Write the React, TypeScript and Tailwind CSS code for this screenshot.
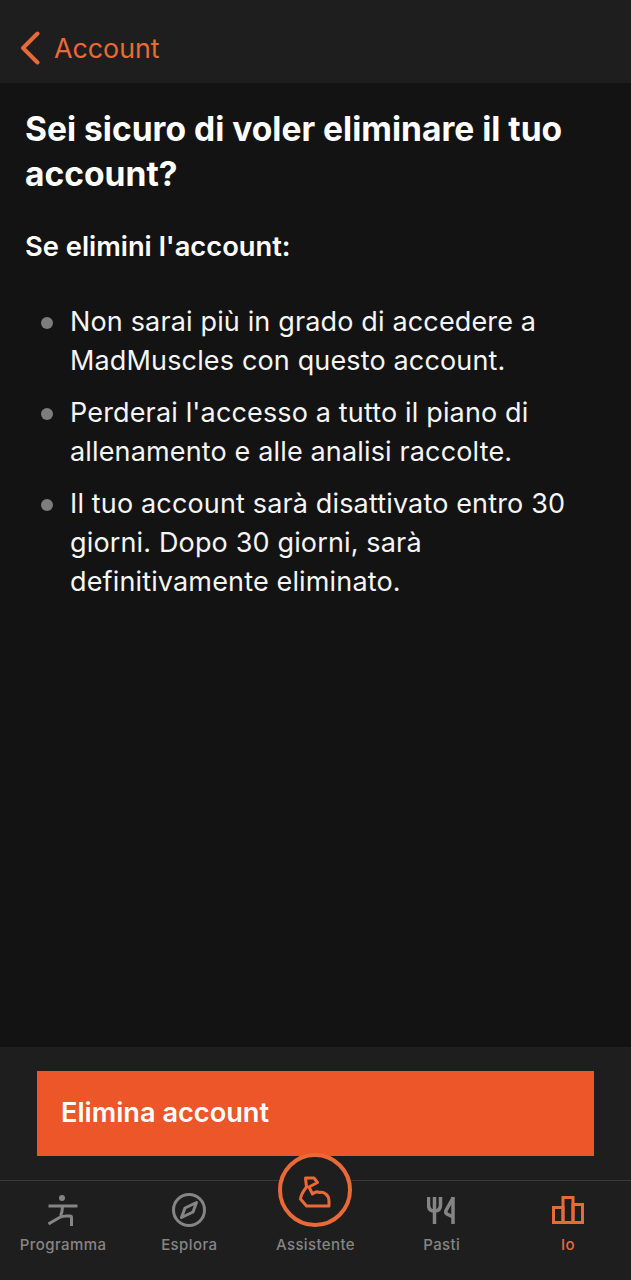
import type { ReactNode } from 'react';

const ORANGE = 'text-[#ea6a37]';

function ProgramIcon() {
  return (
    <svg width="30" height="31" viewBox="0 0 30 31" fill="none" stroke="currentColor" strokeWidth="3">
      <circle cx="14" cy="3" r="3" fill="currentColor" stroke="none" />
      <path d="M0.500 11h29" />
      <path d="M14.500 11c0 4-.5 7-2 10" />
      <path d="M0.500 29l11-6.500c2-1 5-1.500 7-1.500h3.500c1 0 1.500.5 1.500 1.500V31" />
    </svg>
  );
}

function CompassIcon() {
  return (
    <svg width="34" height="34" viewBox="0 0 34 34" fill="none" stroke="currentColor" strokeWidth="3">
      <circle cx="17" cy="17" r="15.500" />
      <path d="M24.500 9.500l-3.500 9.500-11.500 5.500 3.500-9.500z" strokeLinejoin="round" />
    </svg>
  );
}

function MealsIcon() {
  return (
    <svg width="30" height="28" viewBox="0 0 30 28" fill="none" stroke="currentColor" strokeWidth="3.500">
      <path d="M1.500 1v8c0 3.500 2 6 6 6s6-2.500 6-6V1" />
      <path d="M7.500 1v27" />
      <path d="M26 1v27" />
      <path d="M26 2l-7 12.500c-.5 1.500-.5 2.500 1 3.500l6 3" />
    </svg>
  );
}

function StatsIcon() {
  return (
    <svg width="32" height="28" viewBox="0 0 32 28" fill="none" stroke="currentColor" strokeWidth="3">
      <path d="M1.500 26.500v-15h9.500v15z" />
      <path d="M11 26.500V1.500h10v25z" />
      <path d="M21 26.500V8.500h9.500v18z" />
    </svg>
  );
}

function MuscleIcon() {
  return (
    <svg className="mt-[4px]" width="32" height="32" viewBox="0 0 32 32" fill="none" stroke="currentColor" strokeWidth="3" strokeLinejoin="round" strokeLinecap="round">
      <path d="M6.500 2H15l3.500 4.500-8.500 4.500 3.500 7c2-2 5-2.500 7-1.500 4-1 9.500 2 9.500 8.500v5H7.500L1.500 23c0-4 3-8 6-12z" />
    </svg>
  );
}

function Tab({ icon, label, active }: { icon: ReactNode; label: string; active?: boolean }) {
  return (
    <div className={`flex flex-1 flex-col items-center ${active ? ORANGE : 'text-[#858585]'}`}>
      <div className="flex h-[40px] items-center justify-center">{icon}</div>
      <span className="mt-[5px] text-[15px] leading-[20px] font-medium tracking-[0.4px]">{label}</span>
    </div>
  );
}

export default function App() {
  const points = [
    'Non sarai più in grado di accedere a MadMuscles con questo account.',
    "Perderai l'accesso a tutto il piano di allenamento e alle analisi raccolte.",
    'Il tuo account sarà disattivato entro 30 giorni. Dopo 30 giorni, sarà definitivamente eliminato.',
  ];

  return (
    <div className="flex h-[1280px] w-[631px] flex-col overflow-hidden bg-[#131313] font-['Inter',sans-serif] text-white">
      <header className={`flex h-[83px] shrink-0 items-center bg-[#1e1e1e] pt-[13px] pl-[20px] ${ORANGE}`}>
        <svg width="20" height="34" viewBox="0 0 20 34" fill="none" stroke="currentColor" strokeWidth="4" strokeLinecap="round" strokeLinejoin="round">
          <path d="M17.500 2.500L3 17l14.500 14.500" />
        </svg>
        <span className="ml-[14px] text-[26.800px] leading-[34px]">Account</span>
      </header>

      <main className="flex-1 px-[25px] pt-[23px]">
        <h1 className="text-[33.600px] leading-[45px] font-bold">Sei sicuro di voler eliminare il tuo account?</h1>
        <p className="mt-[34px] text-[27.300px] leading-[34px] font-semibold">Se elimini l'account:</p>
        <ul className="mt-[38px] flex flex-col gap-[13px]">
          {points.map((point) => (
            <li key={point} className="flex">
              <span className="mt-[15px] ml-[16px] h-[12px] w-[12px] shrink-0 rounded-full bg-[#7d7d7d]" />
              <span className="ml-[17px] text-[27px] leading-[39px] tracking-[0.15px] text-[#f5f5f5]">{point}</span>
            </li>
          ))}
        </ul>
      </main>

      <footer className="h-[233px] shrink-0 bg-[#1e1e1e]">
        <div className="px-[37px] pt-[24px]">
          <div className="flex h-[85px] items-center bg-[#ec5628] pl-[24px] text-[27.200px] font-semibold">Elimina account</div>
        </div>
        <nav className="relative mt-[24px] flex h-[100px] border-t border-[#3a3a3a] pt-[9px]">
          <div className="flex w-full">
            <Tab icon={<ProgramIcon />} label="Programma" />
            <Tab icon={<CompassIcon />} label="Esplora" />
            <div className="flex flex-1 flex-col items-center text-[#858585]">
              <div className="h-[40px]" />
              <span className="mt-[5px] text-[15px] leading-[20px] font-medium tracking-[0.4px]">Assistente</span>
            </div>
            <Tab icon={<MealsIcon />} label="Pasti" />
            <Tab icon={<StatsIcon />} label="Io" active />
          </div>
          <div className={`absolute top-[-28px] left-[278px] flex h-[74px] w-[74px] items-center justify-center rounded-full border-[4px] border-[#ea6a37] bg-[#1e1e1e] ${ORANGE}`}>
            <MuscleIcon />
          </div>
        </nav>
      </footer>
    </div>
  );
}
